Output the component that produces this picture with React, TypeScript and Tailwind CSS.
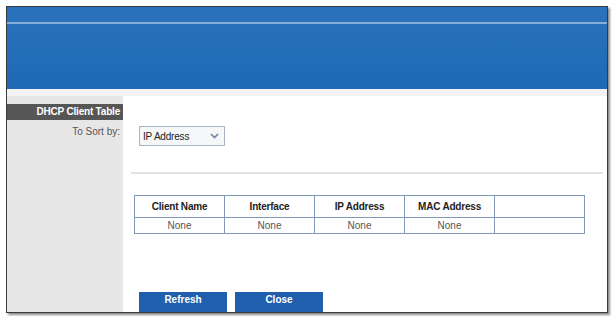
import React from "react";

const columns = ["Client Name", "Interface", "IP Address", "MAC Address", ""];
const rows = [["None", "None", "None", "None", ""]];

export default function App() {
  return (
    <div
      className="w-[614px] h-[318px] bg-white pt-[6px] pl-[6px] overflow-hidden"
      style={{ fontFamily: '"Liberation Sans", Arial, sans-serif' }}
    >
      <div className="w-[602px] h-[307px] border border-[#3a3a3a] shadow-[2px_2px_2px_rgba(0,0,0,0.45)] flex flex-col overflow-hidden bg-white">
        {/* header band */}
        <div className="h-[86px] bg-gradient-to-b from-[#2a72bb] to-[#1f69b5] pt-[15px]">
          <div className="h-[2px] bg-[#86acd9]" />
        </div>
        <div className="h-[7px] bg-[#f2f2f2]" />

        <div className="flex flex-1">
          {/* left column */}
          <div className="w-[117px] bg-[#e7e7e7] border-r border-white pt-[8px]">
            <div className="h-[16px] bg-[#565656] text-white text-[10px] font-bold text-right pr-[3px] leading-[16px] tracking-[-0.2px]">
              DHCP Client Table
            </div>
            <div className="mt-[6px] text-[10px] text-[#555] text-right pr-[3px] leading-[12px]">
              To Sort by:
            </div>
          </div>

          {/* content */}
          <div className="flex-1 flex flex-col">
            <div className="ml-[15px] mt-[30px] w-[86px] h-[20px] border border-[#a9b3c2] bg-[#f6f7f9] flex items-center justify-between px-[3px]">
              <span className="text-[10px] text-[#222] tracking-[-0.2px]">IP Address</span>
              <svg width="9" height="6" viewBox="0 0 9 6" className="mr-[2px]">
                <path d="M1 1 L4.5 4.5 L8 1" fill="none" stroke="#6f84a3" strokeWidth="1.6" />
              </svg>
            </div>

            <div className="ml-[7px] mr-[4px] mt-[26px] h-[2px] bg-[#e6e2de]" />

            <table className="ml-[10px] mt-[21px] w-[448px] border-collapse text-[10px] table-fixed">
              <thead>
                <tr className="h-[22px]">
                  {columns.map((c, i) => (
                    <th
                      key={i}
                      className="border border-[#8298bb] font-bold text-[#222] text-center w-[90px] tracking-[-0.2px]"
                    >
                      {c}
                    </th>
                  ))}
                </tr>
              </thead>
              <tbody>
                {rows.map((r, ri) => (
                  <tr key={ri} className="h-[16px]">
                    {r.map((v, i) => (
                      <td
                        key={i}
                        className="border border-[#8298bb] text-center text-[#555] leading-[14px]"
                      >
                        {v}
                      </td>
                    ))}
                  </tr>
                ))}
              </tbody>
            </table>

            <div className="ml-[15px] mt-[58px] flex gap-[8px]">
              <button className="w-[88px] h-[20px] bg-[#1f5fae] text-white text-[10px] font-bold leading-[16px] pb-[4px]">
                Refresh
              </button>
              <button className="w-[88px] h-[20px] bg-[#1f5fae] text-white text-[10px] font-bold leading-[16px] pb-[4px]">
                Close
              </button>
            </div>
          </div>
        </div>
      </div>
    </div>
  );
}
